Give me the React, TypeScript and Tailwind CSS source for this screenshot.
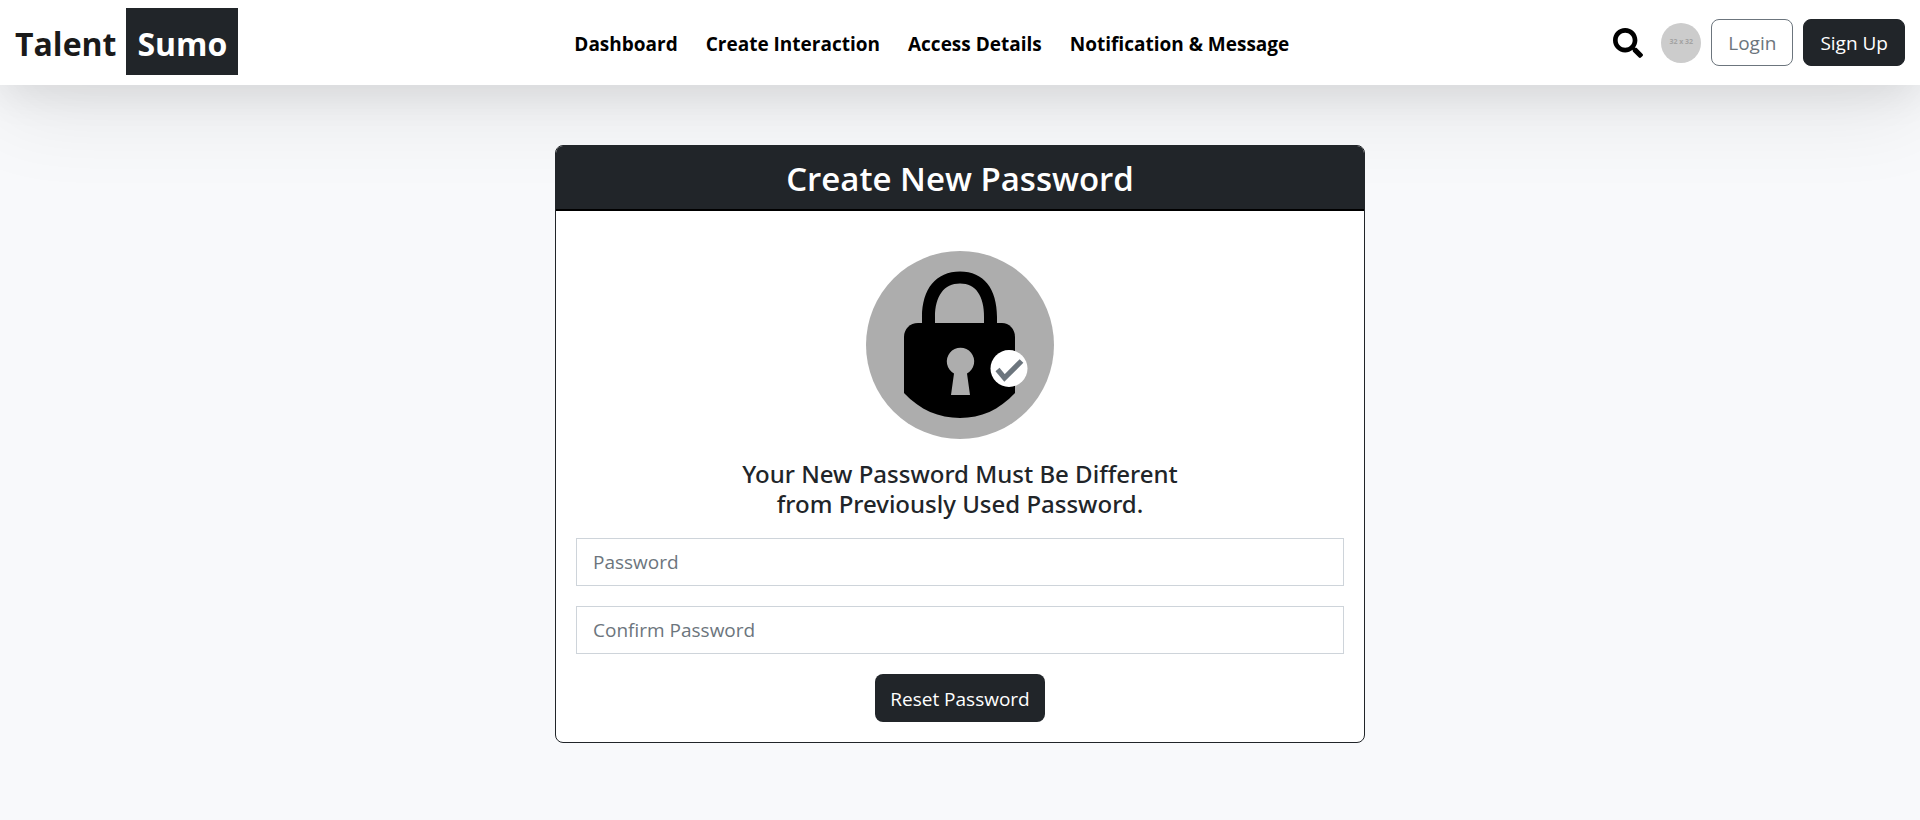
import React from "react";
import { FaSearch } from "react-icons/fa";

const links = ["Dashboard", "Create Interaction", "Access Details", "Notification & Message"];

function LockBadge() {
  return (
    <svg viewBox="0 0 188 188" className="block h-47 w-47" role="img" aria-label="Locked">
      <circle cx="94" cy="94" r="94" fill="#adadad" />
      <path
        d="M56 73V66C56 38 70 20.500 94 20.500C118 20.500 131 38 131 66V73H118V66C118 45 110 32.500 94 32.500C78 32.500 69 45 69 66V73Z"
        fill="#000"
      />
      <path d="M52 72H136C143 72 149 78 149 86V142C133 159 115 167 94 167C73 167 54 159 38 142V86C38 78 44 72 52 72Z" fill="#000" />
      <path d="M88 122.500A13.700 13.700 0 1 1 101 122.500L104 144H85Z" fill="#adadad" />
      <circle cx="143" cy="117.500" r="18.500" fill="#fff" />
      <path d="M131.500 118.500L138.500 127L155.500 110" fill="none" stroke="#6c757d" strokeWidth="5.200" />
    </svg>
  );
}

function Header() {
  return (
    <header className="relative flex items-center justify-between bg-white px-[15px] pt-2 pb-2.5 shadow-[0_24px_90px_rgba(0,0,0,0.09),0_8px_40px_rgba(0,0,0,0.09)]">
      <a href="#" className="flex items-center gap-2.5 text-[32px] font-bold text-[#1a1a1a]">
        <span className="pt-1 leading-[63px]">Talent</span>
        <span className="bg-[#212529] px-[11px] pt-1 leading-[63px] text-white">Sumo</span>
      </a>
      <nav className="ml-3 pt-1.5">
        <ul className="flex items-center gap-7">
          {links.map((link) => (
            <li key={link}>
              <a href="#" className="text-[19px] font-bold text-black">
                {link}
              </a>
            </li>
          ))}
        </ul>
      </nav>
      <div className="flex items-center gap-2.5 pt-0.5">
        <button type="button" aria-label="Search" className="mr-2 text-black">
          <FaSearch size={30} />
        </button>
        <span className="flex h-10 w-10 items-center justify-center rounded-full bg-[#cccccc] text-[7px] font-bold text-[#a3a3a3]">
          32 x 32
        </span>
        <button type="button" className="h-[47px] rounded-lg border border-[#6c757d] px-4 pt-0.5 text-[19px] text-[#6c757d]">
          Login
        </button>
        <button type="button" className="h-[47px] rounded-lg border border-[#212529] bg-[#212529] px-4 pt-0.5 text-[19px] text-white">
          Sign Up
        </button>
      </div>
    </header>
  );
}

function Field({ id, label }: { id: string; label: string }) {
  return (
    <div className="mb-5">
      <label htmlFor={id} className="hidden">
        {label}
      </label>
      <input
        id={id}
        type="password"
        placeholder={label}
        className="block h-12 w-full border border-[#ced4da] bg-white px-4 text-[19px] text-[#212529] placeholder:text-[#6c757d]"
      />
    </div>
  );
}

export default function App() {
  return (
    <div className="min-h-screen bg-[#f8f9fb] font-['Open_Sans','Noto_Sans',sans-serif] text-[#212529]">
      <Header />
      <main className="relative px-4 pt-[60px] pb-10">
        <section className="mx-auto max-w-[810px] overflow-hidden rounded-lg border border-[#212529] bg-white">
          <h1 className="border-b-2 border-black bg-[#212529] pt-0.5 text-center text-[33px] leading-[61px] font-semibold text-white">
            Create New Password
          </h1>
          <form className="flex flex-col px-5 pt-10 pb-5" onSubmit={(e) => e.preventDefault()}>
            <div className="flex justify-center">
              <LockBadge />
            </div>
            <h2 className="mt-5 mb-[19px] text-center font-['Noto_Sans',sans-serif] text-[24px] leading-[30px] font-medium">
              Your New Password Must Be Different
              <br />
              from Previously Used Password.
            </h2>
            <Field id="password" label="Password" />
            <Field id="confirm-password" label="Confirm Password" />
            <button type="submit" className="h-12 self-center rounded-lg bg-[#212529] px-[15px] pt-0.5 text-[19px] text-white">
              Reset Password
            </button>
          </form>
        </section>
      </main>
    </div>
  );
}
